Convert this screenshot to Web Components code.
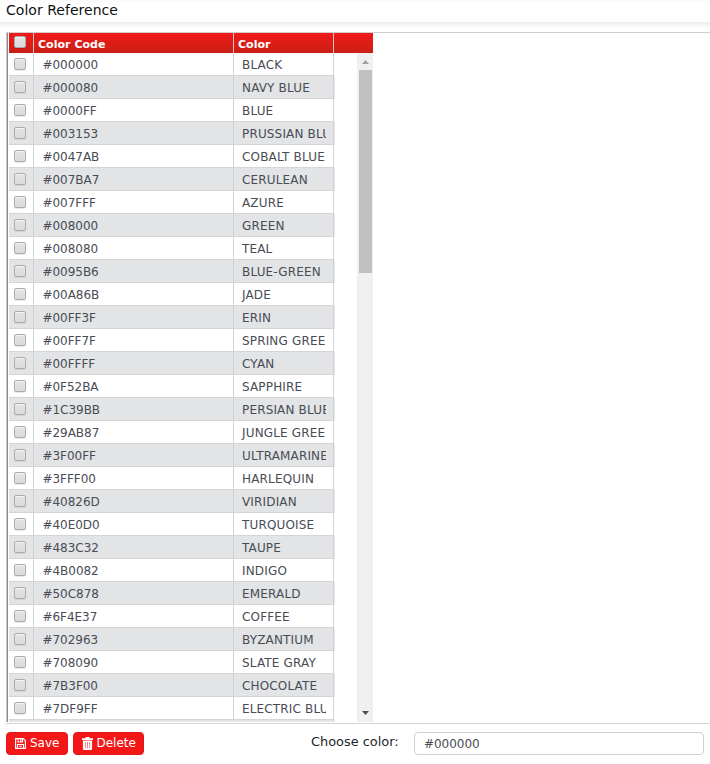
<!DOCTYPE html>
<html lang="en"><head><meta charset="utf-8"><title>Color Reference</title>
<style>html,body{margin:0;height:764px;overflow:hidden;background:#fff;font-family:"DejaVu Sans",Verdana,sans-serif}</style></head>
<body><color-page></color-page>
<script>
const define=(name,html,setup)=>customElements.define(name,class extends HTMLElement{
  connectedCallback(){
    if(this.shadowRoot)return;
    const t=document.createElement('template');t.innerHTML=html;
    this.attachShadow({mode:'open'}).append(t.content.cloneNode(true));
    if(setup)setup(this,this.shadowRoot);
  }
});
define('check-box',`<style>:host{display:block;box-sizing:border-box;width:12px;height:12px;border:1px solid #acacac;border-radius:2px;background:linear-gradient(#e4e4e4,#dadada);box-shadow:0 1px 0 rgba(0,0,0,.08),inset 0 1px 1px rgba(255,255,255,.6)}</style>`);
define('page-title',`<style>:host{display:block;box-sizing:border-box;height:22px;padding:2px 0 0 6px;font-size:14px;line-height:17px;letter-spacing:.03px;color:#111;background:linear-gradient(#fafafa,#fff 3px)}
</style><slot></slot>`);
define('grid-header',`<style>:host{display:grid;grid-template-columns:24px 199px 99px 39px;column-gap:1px;height:20px;background:linear-gradient(#f21a18,#c91f16);color:#fff;font-weight:bold;font-size:11px;line-height:23px;letter-spacing:.03px}
div{height:20px;box-sizing:border-box;padding-left:4px;box-shadow:-1px 0 #e3c4c2}
.k{box-shadow:none;padding:3px 0 0 5px}</style>
<div class="k"><check-box></check-box></div><div>Color Code</div><div>Color</div><div></div>`);
define('grid-row',`<style>:host{display:grid;box-sizing:border-box;grid-template-columns:24px 199px 99px;column-gap:1px;width:325px;height:23px;font-size:12px;line-height:24px;color:#494c54}
:host([alt]){width:326px;background:#e2e4e6}
div{box-sizing:border-box;height:23px;border-bottom:1px solid #d3d5d7;box-shadow:-1px 0 #d0d2d4;padding:0 8px;white-space:nowrap}
.k{box-shadow:none;padding:5px 0 0 5px}
.c{padding-left:8.5px;letter-spacing:-.04px}
.n{box-shadow:-1px 0 #d0d2d4,1px 0 #d0d2d4;padding-right:7px;letter-spacing:.16px}
span{display:block;overflow:hidden;height:22px;margin-left:-3px;padding-left:3px}</style>
<div class="k"><check-box></check-box></div><div class="c"><span id="c"></span></div><div class="n"><span id="n"></span></div>`,(e,r)=>{r.getElementById('c').textContent=e.getAttribute('code');r.getElementById('n').textContent=e.getAttribute('name')});
define('scroll-bar',`<style>:host{display:flex;box-sizing:border-box;flex-direction:column;justify-content:space-between;width:16px;height:669px;background:#f0f0f0}
svg{display:block}i{display:block;width:13px;height:203px;margin-left:2px;background:#c0c0c0}b{flex:1}</style>
<svg width="16" height="17"><path d="M5 11 8.5 7 12 11Z" fill="#a0a0a0"/></svg><i></i><b></b><svg width="16" height="17"><path d="M5 6h7L8.5 10Z" fill="#4d4d4d"/></svg>`);
define('color-grid',`<style>:host{display:block;box-sizing:border-box;height:692px;margin:10px 0 0 6px;border-top:1px solid #cfcfcf;border-bottom:1px solid #d5d5d5}
.g{box-sizing:border-box;width:367px;height:689px;border-left:1px solid #c6c6c6;overflow:hidden}.i{border-left:1px solid #8c8c8c;padding-left:1px}.b{display:flex;justify-content:space-between;height:669px;overflow:hidden}</style>
<div class="g"><div class="i"><grid-header></grid-header><div class="b"><div id="r"></div><scroll-bar></scroll-bar></div></div></div>`,(e,r)=>{
 const data='000000 BLACK|000080 NAVY BLUE|0000FF BLUE|003153 PRUSSIAN BLUE|0047AB COBALT BLUE|007BA7 CERULEAN|007FFF AZURE|008000 GREEN|008080 TEAL|0095B6 BLUE-GREEN|00A86B JADE|00FF3F ERIN|00FF7F SPRING GREEN|00FFFF CYAN|0F52BA SAPPHIRE|1C39BB PERSIAN BLUE|29AB87 JUNGLE GREEN|3F00FF ULTRAMARINE|3FFF00 HARLEQUIN|40826D VIRIDIAN|40E0D0 TURQUOISE|483C32 TAUPE|4B0082 INDIGO|50C878 EMERALD|6F4E37 COFFEE|702963 BYZANTIUM|708090 SLATE GRAY|7B3F00 CHOCOLATE|7DF9FF ELECTRIC BLUE'.split('|');
 data.forEach((s,i)=>{const row=document.createElement('grid-row');row.setAttribute('code','#'+s.slice(0,6));row.setAttribute('name',s.slice(7));if(i%2)row.setAttribute('alt','');r.getElementById('r').append(row)});
 const strip=document.createElement('div');strip.style.cssText='width:326px;height:2px;background:#e2e4e6';r.getElementById('r').append(strip);
});
define('action-button',`<style>:host{display:flex;box-sizing:border-box;height:23px;border:1px solid #df1717;border-radius:4px;background:#f31717;color:#fff;font-size:12px;line-height:19px;padding:0 0 1px 8px;gap:4px;align-items:center}::slotted(svg){display:block}</style><slot></slot>`);
define('color-input',`<style>:host{display:block;box-sizing:border-box;width:290px;height:23px;border:1px solid #cdd1d9;border-radius:4px;padding-left:9px;font-size:12px;line-height:22px;letter-spacing:-.04px;color:#494c54}</style><slot></slot>`);
define('tool-bar',`<style>:host{display:flex;padding:8px 0 0 6px;align-items:flex-start}.s{width:62px;margin-right:5px}.d{width:71px;gap:3.5px}label{margin-left:167px;width:103px;font-size:12.9px;line-height:20px;color:#212529}</style>
<action-button class="s"><svg width="11" height="11" viewBox="0 0 11 11" fill="none" stroke="#fff"><path d="M.6.6H8.3L10.4 2.7V10.4H.6Z" stroke-width="1.2"/><path d="M3 .6V4H7.5V.6M2.5 10.4V6.5H8.5V10.4M5.8 1V3.5M4.2 8.2H6.8" stroke-width="1.1"/></svg><span>Save</span></action-button>
<action-button class="d"><svg width="11" height="13" viewBox="0 0 11 13"><path d="M3.5 0H7.5V1.3H11V3H0V1.3H3.5Z" fill="#fff"/><path d="M.9 3.6H10.1V11.7Q10.1 13 8.8 13H2.2Q.9 13 .9 11.7Z" fill="#fff"/><path d="M3.3 5V11.3M5.5 5V11.3M7.7 5V11.3" stroke="#f36a6a" stroke-width=".8"/></svg><span>Delete</span></action-button>
<label>Choose color:</label><color-input>#000000</color-input>`);
define('color-page',`<style>:host{display:block;width:710px;height:764px;background:linear-gradient(#ececec,#fff) 0 22px/100% 6px no-repeat,#fff}</style><page-title>Color Reference</page-title><color-grid></color-grid><tool-bar></tool-bar>`);
</script></body></html>
